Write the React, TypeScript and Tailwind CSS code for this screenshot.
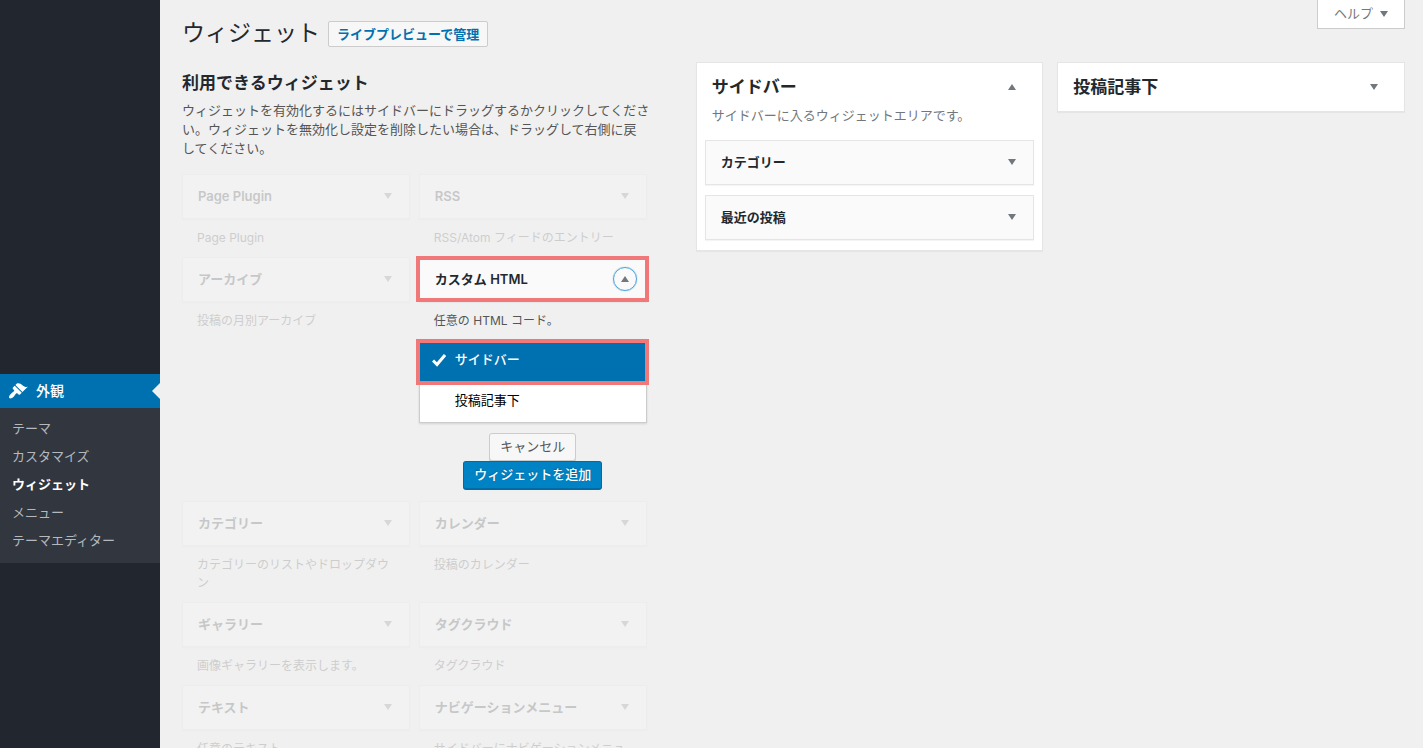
import { ReactNode } from "react";

const submenu = [
  { label: "テーマ" },
  { label: "カスタマイズ" },
  { label: "ウィジェット", current: true },
  { label: "メニュー" },
  { label: "テーマエディター" },
];

const Triangle = ({ up }: { up?: boolean }) => (
  <svg width="8" height="6" viewBox="0 0 8 6" fill="currentColor" aria-hidden>
    <path d={up ? "M4 0l4 6H0z" : "M0 0h8L4 6z"} />
  </svg>
);

const BrushIcon = () => (
  <svg width="20" height="20" viewBox="0 0 20 20" fill="currentColor" aria-hidden>
    <path d="M14.48 11.06L7.41 3.99l1.5-1.5c.5-.56 2.3-.47 3.51.32 1.21.8 1.43 1.28 2.91 2.1 1.18.64 2.45 1.26 4.45.85zm-.71.71L6.7 4.7 4.93 6.47c-.39.39-.39 1.02 0 1.41l1.06 1.06c.39.39.39 1.03 0 1.42-.6.6-1.43 1.11-2.21 1.69-.35.26-.7.53-1.01.84C1.43 14.23.4 16.08 1.4 17.07c.99 1 2.84-.03 4.18-1.36.31-.31.58-.66.85-1.02.57-.78 1.08-1.61 1.69-2.21.39-.39 1.02-.39 1.41 0l1.06 1.06c.39.39 1.02.39 1.41 0z" />
  </svg>
);

const CheckIcon = () => (
  <svg width="14" height="14" viewBox="0 0 14 14" fill="none" stroke="currentColor" strokeWidth="3" aria-hidden>
    <path d="M1 7.5l4 4 8-9.5" />
  </svg>
);

type WidgetCardProps = {
  title: string;
  open?: boolean;
  children?: ReactNode;
};

const WidgetCard = ({ title, open, children }: WidgetCardProps) => (
  <div className="relative flex h-[45px] items-center justify-between border border-[#e5e5e5] bg-[#fafafa] pr-[9px] pb-px pl-[15px] shadow-[0_1px_1px_rgba(0,0,0,0.04)]">
    <h3 className="truncate text-[13px] leading-[18px] font-semibold text-[#23282d]">
      {title}
    </h3>
    <button
      type="button"
      aria-label={title}
      aria-expanded={!!open}
      className={
        open
          ? "flex size-6 items-center justify-center rounded-full border border-[#4ba3dc] text-[#72777c] shadow-[0_0_1px_rgba(30,140,190,0.8)]"
          : "flex size-6 items-center justify-center text-[#72777c]"
      }
    >
      <Triangle up={open} />
    </button>
    {children}
  </div>
);

const Available = ({ title, text }: { title: string; text: string }) => (
  <div className="opacity-20">
    <WidgetCard title={title} />
    <p className="px-[15px] py-[10px] text-xs leading-[18px] text-[#444]">
      {text}
    </p>
  </div>
);

const CustomHtml = () => (
  <div>
    <WidgetCard title="カスタム HTML" open>
      <span className="pointer-events-none absolute -top-[2px] -right-[3px] -bottom-px -left-1 border-4 border-[#f07878]" />
    </WidgetCard>
    <p className="px-[15px] pt-[10px] pb-[9px] text-xs leading-[18px] text-[#555]">
      任意の HTML コード。
    </p>
    <ul className="border border-[#ccc] bg-white text-[13px] shadow-[0_1px_2px_rgba(0,0,0,0.12)]">
      <li className="relative">
        <button
          type="button"
          className="flex h-[41px] w-full items-center bg-[#0071b0] pb-[2px] pl-3 font-medium text-white"
        >
          <span className="w-[23px]">
            <CheckIcon />
          </span>
          サイドバー
        </button>
        <span className="pointer-events-none absolute -top-px -right-[3px] -bottom-1 -left-1 border-4 border-[#f07878]" />
      </li>
      <li>
        <button
          type="button"
          className="flex h-[41px] w-full items-center pb-[2px] pl-[35px] text-black"
        >
          投稿記事下
        </button>
      </li>
    </ul>
    <div className="flex flex-col items-center pt-[10px] pb-[11px] text-[13px]">
      <button
        type="button"
        className="h-7 rounded-[3px] border border-[#ccc] bg-[#f7f7f7] px-[10px] text-[#555] shadow-[0_1px_0_#ccc]"
      >
        キャンセル
      </button>
      <button
        type="button"
        className="h-[29px] rounded-[3px] border border-b-2 border-[#006ba5] bg-[#0083c4] px-[10px] font-medium text-white [text-shadow:0_-1px_1px_#006799]"
      >
        ウィジェットを追加
      </button>
    </div>
  </div>
);

const AdminMenu = () => (
  <nav className="w-40 shrink-0 bg-[#22272f] pt-[374px]">
    <a
      href="#"
      className="relative flex h-[34px] items-center gap-2 bg-[#0071b0] pl-2 text-sm font-medium text-white"
    >
      <BrushIcon />
      外観
      <span className="absolute top-[9px] right-0 border-y-8 border-r-8 border-y-transparent border-r-[#f0f0f0]" />
    </a>
    <ul className="bg-[#31363f] pt-[6px] pb-[9px] text-[13px] leading-7">
      {submenu.map((item) => (
        <li key={item.label}>
          <a
            href="#"
            className={
              item.current
                ? "block px-3 font-semibold text-white"
                : "block px-3 text-[#b4b9be]"
            }
          >
            {item.label}
          </a>
        </li>
      ))}
    </ul>
  </nav>
);

const App = () => (
  <div className="flex h-screen overflow-hidden bg-[#f0f0f0] font-[Inter,'Noto_Sans_CJK_JP',sans-serif] text-[#444]">
    <AdminMenu />
    <main className="min-w-0 flex-1 pr-[18px] pl-[22px]">
      <header className="flex h-[62px] items-start justify-between">
        <div className="flex items-center gap-2 pt-5">
          <h1 className="pb-[2px] text-[23px] leading-[26px] text-[#23282d]">
            ウィジェット
          </h1>
          <a
            href="#"
            className="rounded-[2px] border border-[#ccc] bg-[#f7f7f7] px-2 text-[13px] leading-6 font-semibold text-[#0071b0]"
          >
            ライブプレビューで管理
          </a>
        </div>
        <button
          type="button"
          className="flex h-[29px] items-center gap-[7px] border border-t-0 border-[#ccc] bg-white px-4 text-[13px] text-[#72777c]"
        >
          ヘルプ
          <Triangle />
        </button>
      </header>

      <div className="flex items-start justify-between">
        <section className="w-[38%] pt-[9px]">
          <h2 className="text-[17px] leading-6 font-semibold text-[#23282d]">
            利用できるウィジェット
          </h2>
          <p className="mt-[6px] mb-4 text-[13px] leading-[19px] whitespace-nowrap text-[#555]">
            ウィジェットを有効化するにはサイドバーにドラッグするかクリックしてくださ
            <br />
            い。ウィジェットを無効化し設定を削除したい場合は、ドラッグして右側に戻
            <br />
            してください。
          </p>
          <div className="grid grid-cols-2 gap-x-[9px]">
            <Available title="Page Plugin" text="Page Plugin" />
            <Available title="RSS" text="RSS/Atom フィードのエントリー" />
            <Available title="アーカイブ" text="投稿の月別アーカイブ" />
            <CustomHtml />
            <Available
              title="カテゴリー"
              text="カテゴリーのリストやドロップダウン"
            />
            <Available title="カレンダー" text="投稿のカレンダー" />
            <Available title="ギャラリー" text="画像ギャラリーを表示します。" />
            <Available title="タグクラウド" text="タグクラウド" />
            <Available title="テキスト" text="任意のテキスト" />
            <Available
              title="ナビゲーションメニュー"
              text="サイドバーにナビゲーションメニューを追加します。"
            />
          </div>
        </section>

        <section className="grid w-[58%] grid-cols-2 items-start gap-[14px]">
          <div className="border border-[#e5e5e5] bg-white px-2 pb-[10px] shadow-[0_1px_1px_rgba(0,0,0,0.04)]">
            <div className="flex h-12 items-center justify-between pr-[10px] pl-[7px]">
              <h2 className="text-[17px] leading-6 font-semibold text-[#23282d]">
                サイドバー
              </h2>
              <button
                type="button"
                aria-label="サイドバー"
                aria-expanded
                className="flex size-6 items-center justify-center text-[#72777c]"
              >
                <Triangle up />
              </button>
            </div>
            <p className="px-[7px] pb-5 text-[13px] leading-[9px] text-[#72777c]">
              サイドバーに入るウィジェットエリアです。
            </p>
            <div className="flex flex-col gap-[10px]">
              <WidgetCard title="カテゴリー" />
              <WidgetCard title="最近の投稿" />
            </div>
          </div>
          <div className="border border-[#e5e5e5] bg-white px-2 shadow-[0_1px_1px_rgba(0,0,0,0.04)]">
            <div className="flex h-12 items-center justify-between pr-[10px] pl-[7px]">
              <h2 className="text-[17px] leading-6 font-semibold text-[#23282d]">
                投稿記事下
              </h2>
              <button
                type="button"
                aria-label="投稿記事下"
                aria-expanded={false}
                className="flex size-6 items-center justify-center text-[#72777c]"
              >
                <Triangle />
              </button>
            </div>
          </div>
        </section>
      </div>
    </main>
  </div>
);

export default App;
